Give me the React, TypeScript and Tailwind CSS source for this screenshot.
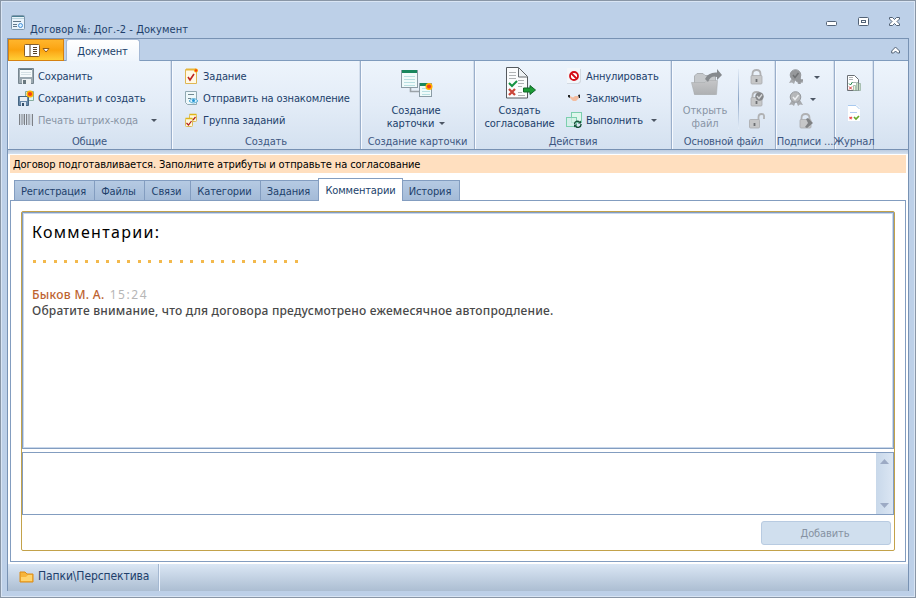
import React from "react";

type P = { children?: React.ReactNode; className?: string };

const Svg = ({ w = 16, h = 16, children }: { w?: number; h?: number; children: React.ReactNode }) => (
  <svg width={w} height={h} viewBox={`0 0 ${w} ${h}`} className="block shrink-0">{children}</svg>
);

const Caret = ({ className = "" }: P) => (
  <svg width="6" height="3" viewBox="0 0 6 3" className={`block shrink-0 ${className}`}><path d="M0 0H6L3 3Z" fill="#4c5664" /></svg>
);

const Burst = ({ x, y, r = 3 }: { x: number; y: number; r?: number }) => (
  <g>
    <circle cx={x} cy={y} r={r} fill="#ffb400" />
    <circle cx={x} cy={y} r={r * 0.6} fill="#f0401c" />
  </g>
);

const FormIcon = () => (
  <Svg w={14} h={15}>
    <rect x=".5" y=".5" width="13" height="14" rx="1" fill="#e9f3fb" stroke="#7d97ad" />
    <path d="M1 1.500H13" stroke="#4c8092" />
    <path d="M1 3.500H13" stroke="#b9d3dc" />
    <path d="M2 6.500H10M2 9.500H6M2 11.500H6" stroke="#61778a" />
    <circle cx="9.500" cy="10.500" r="2" fill="#d8f0ff" stroke="#4a90d6" />
  </Svg>
);

const SaveIcon = () => (
  <Svg>
    <path d="M.5 .5H15.500V15.500H.5Z" fill="#9ba8b0" stroke="#76858f" />
    <rect x="2" y="1" width="12" height="8" fill="#f6fafb" />
    <path d="M2 1.500H14" stroke="#5e7783" />
    <path d="M3 4.500H13M3 6.500H13" stroke="#d5e0e4" />
    <rect x="4" y="11" width="9" height="5" fill="#edf1f3" />
    <rect x="5" y="12" width="3" height="4" fill="#68777f" />
  </Svg>
);

const SaveNewIcon = () => (
  <Svg>
    <path d="M7.500 1.500H15.500V10.500H7.500Z" fill="#dff4ee" stroke="#86ad9f" />
    <path d="M.5 6.500H10.500V15.500H.5Z" fill="#6787a7" stroke="#466683" />
    <rect x="2" y="7" width="7" height="4" fill="#e9eff5" />
    <rect x="3" y="12" width="5" height="4" fill="#dce7f2" />
    <rect x="4" y="13" width="2" height="3" fill="#354f6a" />
    <Burst x={12} y={4} r={3.500} />
  </Svg>
);

const BarcodeIcon = () => (
  <Svg>
    <path d="M1.500 2V13M4 2V13M6.500 2V13M8.500 2V13M11 2V13M14.500 2V14" stroke="#7c8086" />
    <path d="M3 2V13M5.500 2V12M10 2V13M13 2V13" stroke="#aeb3b9" strokeWidth=".7" />
  </Svg>
);

const TaskIcon = () => (
  <Svg>
    <path d="M2.500 1.500H13.500V15.500H2.500Z" fill="#fff9e6" stroke="#dfb652" />
    <path d="M3 1.500H13" stroke="#e5b63c" strokeWidth="2" />
    <path d="M5 9L7 12L11 6" fill="none" stroke="#be2620" strokeWidth="1.600" />
    <Burst x={13} y={2.500} r={2} />
  </Svg>
);

const ReviewIcon = () => (
  <Svg>
    <path d="M2.500 1.500H13.500V14.500H4.500L2.500 12.500Z" fill="#eef8fa" stroke="#91a9b2" />
    <path d="M5 4.500H11M5 8.500H8" stroke="#728993" />
    <path d="M6 11Q10.500 6 15 11Q10.500 15 6 11Z" fill="#d5f1ff" stroke="#5aafd5" />
    <circle cx="10.500" cy="10.500" r="1.500" fill="#2495d4" />
  </Svg>
);

const TasksIcon = () => (
  <Svg>
    <rect x="6.500" y="2.500" width="7" height="7" rx="1" fill="#fff8d9" stroke="#dcbc58" />
    <path d="M6.500 2.500H13.500" stroke="#dfb619" strokeWidth="1.500" />
    <rect x="2.500" y="6.500" width="7" height="8" rx="1" fill="#fff8d9" stroke="#dcbc58" />
    <path d="M2.500 6.500H9.500" stroke="#dfb619" strokeWidth="1.500" />
    <path d="M3.500 11L5.500 13L8.500 9M10 8L12.500 5" fill="none" stroke="#b31c1c" strokeWidth="1.200" />
  </Svg>
);

const CardsIcon = () => (
  <Svg w={32} h={32}>
    <path d="M9.500 18V22.500H19" fill="none" stroke="#9ba2a8" strokeWidth="1.600" />
    <rect x=".5" y="1.500" width="16" height="17" fill="#effafa" stroke="#8b9ba5" />
    <rect x="1" y="1" width="15" height="3" fill="#17865d" />
    <path d="M3 7.500H14M3 10.500H14M3 13.500H14M3 16.500H14" stroke="#b7dfe2" />
    <rect x="18.500" y="14.500" width="12" height="13" fill="#effafa" stroke="#8b9ba5" />
    <rect x="19" y="14" width="8" height="3" fill="#17865d" />
    <path d="M21 19.500H29M21 22.500H29M21 25.500H29" stroke="#b7dfe2" />
    <Burst x={28} y={17.500} r={3.500} />
  </Svg>
);

const ApproveIcon = () => (
  <Svg w={32} h={32}>
    <path d="M2.500 .5H14.500L23.500 9.500V31H2.500Z" fill="#fbfcfd" stroke="#555a5e" />
    <path d="M14.500 1V10H23" fill="#edf1f4" stroke="#666b70" />
    <path d="M5 5.500H12M5 8.500H12M5 11.500H12M14 13.500H20M14 16.500H20M14 19.500H18M14 25.500H18M14 28.500H21" stroke="#b0b3b5" />
    <path d="M5 16L8 19L13 14" fill="none" stroke="#169243" strokeWidth="2" />
    <path d="M5 22L11 28M11 22L5 28" stroke="#c94539" strokeWidth="2.300" />
    <path d="M19.500 21H26V18.500L31.500 23L26 27.500V25H19.500Z" fill="#1c9c37" stroke="#12672b" />
  </Svg>
);

const CancelIcon = () => (
  <Svg>
    <path d="M1 1H15V14L13 16H1Z" fill="#d3dae2" />
    <path d="M1 0H14V13L12 15H1Z" fill="#f3f6fa" />
    <circle cx="8" cy="8" r="4" fill="#fff" stroke="#d40c16" strokeWidth="1.800" />
    <path d="M5 5L11 11" stroke="#d40c16" strokeWidth="1.800" />
  </Svg>
);

const ShakeIcon = () => (
  <Svg>
    <path d="M4 6L7 7.500L9 6H12L13 8L10 11H7L4 8Z" fill="#f3bda1" />
    <path d="M2 5H4V8L2 7ZM12 5L14 4.500V8H13Z" fill="#262626" />
  </Svg>
);

const ExecIcon = () => (
  <Svg>
    <rect x="5.500" y=".5" width="10" height="10" fill="#dff7ed" stroke="#7ccfae" />
    <rect x=".5" y="5.500" width="10" height="9" fill="#d2f1e5" fillOpacity=".7" stroke="#7ccfae" />
    <path d="M8.500 12A3 3 0 0 1 13.500 10M15 12A3 3 0 0 1 9.500 14" fill="none" stroke="#164f36" strokeWidth="1.400" />
    <path d="M12 11.500H15V8.500ZM11 12.500H8V15.500Z" fill="#164f36" />
  </Svg>
);

const FolderOpenIcon = () => (
  <Svg w={32} h={28}>
    <defs><linearGradient id="folder" x1="0" y1="0" x2="0" y2="1"><stop offset="0" stopColor="#c5c6c8" /><stop offset="1" stopColor="#aeb0b2" /></linearGradient></defs>
    <path d="M3.500 25V7L6 4.500H12L14 6.500H24.500V25Z" fill="#c5c8cb" stroke="#acb0b4" />
    <path d="M.5 13.500H14L16 11.500H26.500L25.500 25.500H3.500Z" fill="url(#folder)" stroke="#a9acaf" strokeWidth=".6" />
    <path d="M14 10Q17 3 26 3.500V0L31 6L26 11V8Q20 6 17 13Z" fill="#85898d" />
  </Svg>
);

const LockIcon = ({ kind = 0 }: { kind?: number }) => (
  <Svg>
    <path d={kind === 2 ? "M9.500 7V4Q9.500 1 12.500 1T15 4V6" : "M3.500 8V5Q3.500 1 7.500 1T11.500 5V8"} fill="none" stroke="#b0b1b3" strokeWidth="1.800" />
    <rect x={kind === 2 ? .5 : 2} y="6.500" width={kind === 2 ? 10 : 11} height="8.500" rx="1" fill="#c6c7c8" stroke="#a9abad" strokeWidth=".8" />
    {kind !== 3 && <path d={kind === 2 ? "M5.500 10V13" : "M7.500 10V13"} stroke="#6d6f72" strokeWidth="1.800" />}
    {kind === 1 && <g><circle cx="10.500" cy="5.500" r="4.200" fill="#85878a" /><path d="M8 5L10 7.500L13 3.500" fill="none" stroke="#d8dadc" strokeWidth="1.300" /></g>}
    {kind === 3 && <path d="M8 6L10 5L15 10L9 15L7 14L10 10Z" fill="#7f8183" />}
  </Svg>
);

const SealIcon = ({ plus = false }: { plus?: boolean }) => (
  <Svg>
    <path d="M4 9L1 14L4 13.500L6 15L8 10L10 15L12 13.500L15 14L12 9Z" fill="#a7aaae" />
    <circle cx="7.500" cy="6" r="5.300" fill={plus ? "#96989b" : "#b6b8ba"} stroke="#96999d" />
    <path d="M5 6L7 8.500L10.500 4" fill="none" stroke={plus ? "#6f7174" : "#eceef0"} strokeWidth="1.500" />
    {plus && <path d="M11.500 8V15M8 11.500H15" stroke="#94979b" strokeWidth="2.500" />}
  </Svg>
);

const JournalIcon = () => (
  <Svg>
    <path d="M1.500 .5H8.500L12.500 4.500V15.500H1.500Z" fill="#fff" stroke="#6a6f74" />
    <path d="M3 2.500H7M3 4.500H7M7 7.500H10" stroke="#b0b3b6" />
    <path d="M3 8.500L4.500 10L6.500 7" stroke="#198344" fill="none" />
    <path d="M3 11.500L6 14.500M6 11.500L3 14.500" stroke="#d73535" />
    <path d="M7.500 10.500H9.500V15.500H7.500ZM10.500 7.500H12V15.500H10.500ZM13 8.500H14.500V15.500H13Z" fill="#eef8dc" stroke="#8ba99a" strokeWidth=".7" />
  </Svg>
);

const DocIcon = () => (
  <Svg>
    <path d="M2 0H11L14 3V16H2Z" fill="#fff" /><path d="M2 .5H10L13.500 4" stroke="#a8c9ef" fill="none" />
    <path d="M4 7.500H11" stroke="#b3cdf0" /><path d="M3.500 12L6 14M6 12L3.500 14" stroke="#ef5151" strokeWidth="1.500" />
    <path d="M8 12L10 14L13 11" fill="none" stroke="#68aa28" strokeWidth="1.700" />
  </Svg>
);

const Group = ({ label, className = "", children }: P & { label: string }) => (
  <div className={`flex h-[88px] shrink-0 flex-col border-r border-[#9aafcb] shadow-[inset_-1px_0_#d3deec,inset_1px_0_#f7faff] ${className}`}>
    <div className="flex h-[72px] pt-1">{children}</div>
    <div className="flex h-4 justify-center whitespace-nowrap pt-px leading-4 text-[#3d5781]">{label}</div>
  </div>
);

const Item = ({ icon, text, caret = "", dim = false }: { icon: React.ReactNode; text: string; caret?: string; dim?: boolean }) => (
  <div className={`flex h-[22px] items-center whitespace-nowrap ${dim ? "text-[#8995a5]" : ""}`}>
    {icon}<span className="ml-1 pt-0.5">{text}</span>{caret && <Caret className={caret} />}
  </div>
);

const tabs: [string, string][] = [
  ["Регистрация", "w-[81px]"], ["Файлы", "w-[50px]"], ["Связи", "w-[46px]"], ["Категории", "w-[70px]"],
  ["Задания", "w-[58px]"], ["Комментарии", "w-[85px]"], ["История", "w-[57px]"],
];

export default function App() {
  return (
    <div className="flex h-[598px] w-[916px] flex-col overflow-hidden border border-[#8996a6] bg-[#bdd0e8] px-1.5 pb-1.5 font-['DejaVu_Sans_Condensed','DejaVu_Sans',sans-serif] text-[11px] leading-[14px] tracking-[-0.12px] text-[#213f6b] [font-stretch:condensed] shadow-[inset_0_0_0_1px_#d9e5f4]">
      <header className="flex h-[37px] shrink-0 pl-1">
        <div className="pt-[14px]"><FormIcon /></div>
        <div className="ml-[5px] pt-[22px] tracking-[0.06px]">Договор №: Дог.-2 - Документ</div>
        <div className="ml-auto flex gap-[20px] pr-2 pt-[15px]">
          <Svg w={12} h={12}><rect x=".5" y="5.500" width="10" height="4" rx="1" fill="#fff" stroke="#526276" /></Svg>
          <Svg w={11} h={12}><rect x=".5" y="1.500" width="10" height="8" rx="1" fill="#fff" stroke="#526276" /><rect x="3.500" y="4.500" width="4" height="2" fill="#fff" stroke="#526276" /></Svg>
          <Svg w={12} h={12}><path d="M.5 1.500H3.500L5.500 3.500L7.500 1.500H10.500V3L8 5.500L10.500 8V9.500H7.500L5.500 7.500L3.500 9.500H.5V8L3 5.500L.5 3Z" fill="#fff" stroke="#526276" /></Svg>
        </div>
      </header>

      <main className="flex h-[553px] w-[902px] shrink-0 flex-col border border-[#7892b3] bg-white">
        <div className="flex h-[22px] shrink-0 border-b border-[#7f9bbd] bg-[#bdd0e8]">
          <button className="flex h-[22px] w-14 items-center justify-center border border-[#d58112] bg-linear-to-b from-[#ffb52b] via-[#fba30d] to-[#ffcf35] pl-0.5">
            <Svg w={16} h={13}><rect x=".5" y=".5" width="15" height="12" rx="1" fill="#fff" stroke="#865e29" /><path d="M6 1V12M9 3.500H13M9 5.500H13M9 7.500H13M9 9.500H13" stroke="#574126" /></Svg>
            <svg width="8" height="5" viewBox="0 0 8 5" className="ml-0.5"><path d="M1 .5H7L4 4Z" fill="#fff" stroke="#925c18" /></svg>
          </button>
          <div className="ml-0.5 flex h-[22px] w-[74px] items-center justify-center rounded-t-[3px] border border-b-0 border-[#a5b9d5] bg-linear-to-b from-white to-[#eff5fc] pr-px pt-[3px]">Документ</div>
          <div className="ml-auto pr-[7px] pt-[7px]"><Svg w={10} h={8}><path d="M.7 5L4.500 1L8.500 5V7H6.500L4.500 5L2.700 7H.7Z" fill="#fff" stroke="#526276" /></Svg></div>
        </div>

        <div className="flex h-[89px] shrink-0 border-b border-[#7791b3] bg-linear-to-b from-[#edf4fc] via-[#e3ecf7] to-[#d4e1f0]">
          <Group label="Общие" className="w-[164px]"><div className="pl-2.5">
            <Item icon={<SaveIcon />} text="Сохранить" /><Item icon={<SaveNewIcon />} text="Сохранить и создать" /><Item dim icon={<BarcodeIcon />} text="Печать штрих-кода" caret="ml-[13px]" />
          </div></Group>
          <Group label="Создать" className="w-[189px]"><div className="pl-[11px]">
            <Item icon={<TaskIcon />} text="Задание" /><Item icon={<ReviewIcon />} text="Отправить на ознакомление" /><Item icon={<TasksIcon />} text="Группа заданий" />
          </div></Group>
          <Group label="Создание карточки" className="w-[114px]"><div className="flex w-full flex-col items-center pr-[3px] pt-1">
            <div className="h-[35px] pl-0.5"><CardsIcon /></div><div className="leading-[13px]">Создание</div><div className="flex items-center leading-[13px]">карточки<Caret className="ml-[5px]" /></div>
          </div></Group>
          <Group label="Действия" className="w-[197px]">
            <div className="flex w-[89px] flex-col items-center pt-0.5"><div className="h-[37px]"><ApproveIcon /></div><div className="leading-[13px]">Создать</div><div className="leading-[13px]">согласование</div></div>
            <div className="pl-0.5"><Item icon={<CancelIcon />} text="Аннулировать" /><Item icon={<ShakeIcon />} text="Заключить" /><Item icon={<ExecIcon />} text="Выполнить" caret="ml-[8px]" /></div>
          </Group>
          <Group label="Основной файл" className="w-[104px]">
            <div className="flex w-[66px] flex-col items-center pt-1 text-[#8995a5]"><div className="h-[35px] pl-1"><FolderOpenIcon /></div><div className="leading-[13px]">Открыть</div><div className="leading-[13px]">файл</div></div>
            <div className="mt-1 h-[60px] w-px bg-linear-to-b from-[#e3ecf7] via-[#8ca5c6] to-[#e3ecf7]" />
            <div className="flex flex-col gap-1.5 pl-[10px] pt-[4px]"><LockIcon /><LockIcon kind={1} /><LockIcon kind={2} /></div>
          </Group>
          <Group label="Подписи ..." className="w-[59px]"><div className="flex flex-col gap-1.5 pl-3 pt-[4px]">
            <div className="flex items-center gap-[10px]"><SealIcon plus /><Caret /></div><div className="flex items-center gap-[6px]"><SealIcon /><Caret /></div><div className="pl-[10px]"><LockIcon kind={3} /></div>
          </div></Group>
          <Group label="Журнал" className="w-[39px]"><div className="flex flex-col gap-[14px] pl-[11px] pt-[10px]"><JournalIcon /><DocIcon /></div></Group>
        </div>
        <div className="h-1 shrink-0 bg-linear-to-b from-[#bdcce0] to-[#d5e1ef]" />

        <div className="mx-0.5 mt-px flex h-[18px] shrink-0 items-center bg-[#ffdfbf] pl-[3px] pt-px tracking-[-0.11px] text-black">Договор подготавливается. Заполните атрибуты и отправьте на согласование</div>

        <div className="mt-[5px] flex h-[23px] shrink-0 items-end pl-1.5">
          {tabs.map(([label, width]) => label === "Комментарии" ? (
            <div key={label} className={`z-10 -ml-px flex h-[23px] shrink-0 items-center justify-center border border-b-0 border-[#839dc0] bg-white pt-px ${width}`}>{label}</div>
          ) : (
            <div key={label} className={`flex h-[21px] shrink-0 items-center justify-center border border-l-0 border-b-0 border-[#839dc0] bg-linear-to-b from-[#b5cae3] to-[#a3bad7] pr-0.5 pt-px first:border-l ${width}`}>{label}</div>
          ))}
        </div>

        <section className="mx-0.5 -mt-px h-[362px] w-[896px] shrink-0 border border-[#839dc0] bg-white pl-2.5 pt-2.5">
          <div className="flex h-[340px] w-[874px] flex-col rounded-[2px] border border-[#c3a24a]">
            <article className="h-[237px] shrink-0 border border-[#839dc0] pl-[9px] shadow-[inset_0_0_0_1px_#c9d8ec]">
              <h1 className="pt-[9px] font-['Noto_Sans',sans-serif] text-[16px] leading-[21px] tracking-[1.3px] text-black [font-stretch:normal]">Комментарии:</h1>
              <div className="mt-[17px] flex h-[3px] gap-[7.480px] pl-px">
                {Array.from({ length: 26 }, (_, i) => <i key={i} className="h-[3px] w-[3px] shrink-0 bg-[#f3b94d]" />)}
              </div>
              <div className="pt-[24px] font-['Noto_Sans',sans-serif] text-[12px] leading-4 [font-stretch:normal]">
                <div><span className="font-medium tracking-[0.32px] text-[#bd6330]">Быков М. А.</span><span className="ml-[5px] tracking-[1.6px] text-[#b6b6b6]">15:24</span></div>
                <div className="font-medium tracking-[0.2px] text-[#494949]">Обратите внимание, что для договора предусмотрено ежемесячное автопродление.</div>
              </div>
            </article>
            <div className="mt-[3px] flex h-[63px] shrink-0 justify-end border border-[#839dc0]">
              <div className="flex w-[17px] flex-col items-center justify-between bg-linear-to-r from-[#c8d8ea] to-[#dbe6f3] py-1.5">
                <svg width="9" height="5"><path d="M0 5L4.500 0L9 5Z" fill="#9caac4" /></svg><svg width="9" height="5"><path d="M0 0H9L4.500 5Z" fill="#9caac4" /></svg>
              </div>
            </div>
            <button className="mr-[3px] mt-1.5 h-6 w-[130px] self-end rounded-[3px] border border-[#b8cbe1] bg-[#d0dfee] pr-0.5 pt-px text-[#8692a2]">Добавить</button>
          </div>
        </section>
        <footer className="mt-0.5 flex h-[27px] shrink-0 bg-linear-to-b from-[#dbe7f5] to-[#acbed2] pl-[11px]">
          <div className="flex w-[140px] items-center border-r border-[#a4b8d1] pb-[3px] shadow-[1px_0_#eef5ff]">
            <Svg w={15} h={13}><path d="M1 2H6L8 4H14V12H1Z" fill="#f7b53b" stroke="#dc8c17" /><path d="M2 7H7L9 5H13V11H2Z" fill="#ffd36c" /></Svg><span className="ml-1 text-[12px] tracking-[-0.1px]">Папки\Перспектива</span>
          </div>
        </footer>
      </main>
    </div>
  );
}
